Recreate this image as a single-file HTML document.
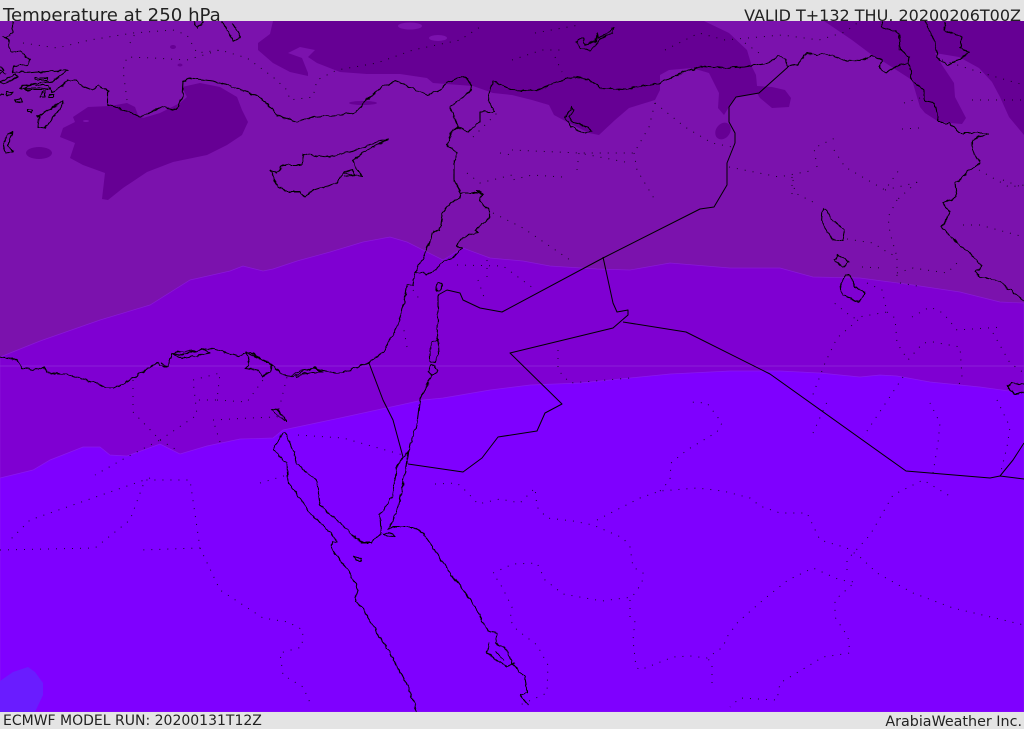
<!DOCTYPE html>
<html><head><meta charset="utf-8"><title>Temperature at 250 hPa</title>
<style>
html,body{margin:0;padding:0;background:#e4e4e4}
#w{position:relative;width:1024px;height:729px;overflow:hidden;background:#e4e4e4;font-family:"DejaVu Sans","Liberation Sans",sans-serif;color:#222}
.t{position:absolute;white-space:nowrap;line-height:1}
svg{position:absolute;left:0;top:21px}
</style></head><body><div id="w">
<div class="t" style="left:3px;top:7px;font-size:18.15px">Temperature at 250 hPa</div>
<div class="t" style="right:3px;top:8px;font-size:16px">VALID T+132 THU, 20200206T00Z</div>
<div class="t" style="left:3px;top:714px;font-size:14px">ECMWF MODEL RUN: 20200131T12Z</div>
<div class="t" style="right:2px;top:715px;font-size:14.3px">ArabiaWeather Inc.</div>
<svg width="1024" height="691" viewBox="0 21 1024 691">
<defs><filter id="j" filterUnits="userSpaceOnUse" x="0" y="21" width="1024" height="691" color-interpolation-filters="sRGB"><feTurbulence type="fractalNoise" baseFrequency="0.16" numOctaves="2" seed="4" result="n"/><feDisplacementMap in="SourceGraphic" in2="n" scale="4" xChannelSelector="R" yChannelSelector="G"/></filter></defs>
<rect x="0" y="21" width="1024" height="691" fill="#7b12ad"/>
<path d="M0 357L40 341 100 320 150 305 190 280 230 271 243 266 263 271 273 269 297 261 330 252 363 242 390 237 407 242 443 260 463 248 490 258 523 261 550 266 597 269 630 270 670 263 730 268 780 268 813 277 860 278 913 285 960 292 1000 302 1024 303V712H0Z" fill="#7f00d2" stroke="#8a18d8" stroke-width=".7"/>
<path d="M0 366H1024" stroke="#8b1fd8" stroke-width="1"/>
<path d="M0 478L33 470 50 460 83 447 100 447 110 455 127 456 160 444 180 454 207 446 240 439 273 438 283 430 340 418 423 400 443 398 490 390 530 385 580 383 630 378 670 374 730 371 780 371 820 373 860 377 880 375 897 376 930 382 980 387 1024 393V712H0Z" fill="#7f00ff" stroke="#8a18f0" stroke-width=".7"/>
<path d="M0 681L13 672 28 667 35 672 43 683 43 695 35 712H0Z" fill="#6a1cff"/>
<g fill="#660094">
<path d="M273 21L270 34 258 43 258 50 273 63 290 72 308 76 308 73 302 58 288 53 300 47 315 50 308 57 317 63 340 72 367 74 400 74 427 78 433 83 473 86 493 93 512 95 532 100 549 105 554 115 567 122 589 133 599 135 615 120 629 108 655 100 660 90 660 75 669 70 692 68 709 73 719 93 718 108 724 115 729 107 736 97 757 93 760 98 772 108 789 107 791 98 785 90 772 87 757 86 756 75 752 67 747 50 729 33 704 21Z"/>
<path d="M824 21L852 40 872 55 884 62 912 80 920 107 925 113 939 122 962 124 966 118 955 97 954 83 942 65 935 53 959 57 979 68 992 82 1000 97 1009 117 1024 135V21Z"/>
<path d="M73 117L88 107 110 106 127 103 135 107 138 115 143 118 160 113 180 103 187 97 182 87 200 83 220 87 237 97 242 110 248 122 242 135 227 145 207 155 173 162 147 172 123 188 108 200 102 199 105 173 83 165 70 158 75 143 60 137 63 128 75 122Z"/>
<ellipse cx="39" cy="153" rx="13" ry="6"/>
<ellipse cx="723" cy="131" rx="7" ry="9" transform="rotate(35 723 131)"/>
<ellipse cx="363" cy="103" rx="14" ry="2"/>
<ellipse cx="173" cy="47" rx="3" ry="2"/>
<ellipse cx="180" cy="65" rx="2.500" ry="1.500"/>
</g>
<g fill="#7b12ad">
<ellipse cx="410" cy="26" rx="12" ry="3.500"/>
<ellipse cx="438" cy="38" rx="9" ry="3"/>
<ellipse cx="86" cy="121" rx="3" ry="1"/>
</g>
<g fill="none" stroke="#000" stroke-width="1" stroke-dasharray="1 7" opacity=".8">
<path d="M435 484L457 483 467 492 478 504 500 499 520 503 535 488 537 507 547 518 573 521 593 525 623 538 630 547 633 567 643 573 642 583 632 597 602 601 563 594 545 580 537 563 513 564 493 573 502 587 512 607 510 620 517 630 537 645 548 665 547 693 520 705"/>
<path d="M597 520L640 498 660 491 697 488 723 491 750 498 760 506 780 513 807 513 820 540 847 548 860 557 877 573 913 593 953 608 1024 625"/>
<path d="M660 491L670 480 671 463 687 450 717 432 722 423 707 403 690 402"/>
<path d="M630 600L630 617 635 620 633 640 636 667 640 670 673 657 690 656 707 658 723 647 727 637 738 622 763 600 788 580 813 568 840 580 855 582 835 600 835 617 848 637 850 653 823 657 780 683 777 700 740 698 730 707M712 683L712 663 707 658"/>
<path d="M847 570L847 560 870 535 893 495 923 480 953 498M813 433L827 402M933 473L938 443 940 423 930 403M793 180L795 193 815 203M847 239L873 243 887 252 897 257 897 277M862 267L882 268M897 200L888 217 890 233 897 257M917 182L897 200M897 273L913 268 947 273 960 260M867 283L882 290 887 312 853 318 833 302M887 312L895 318 897 343 908 360 923 343 933 342 960 347 962 377 958 387M912 317L930 307 943 313 957 330 1003 327M900 283L923 287M858 320L837 338 825 363 812 397M903 377L863 437M997 400L1010 427 1007 447 1000 475M963 225L980 225 1024 237M993 333L1010 363 1024 373M1003 180L1024 188"/>
<path d="M512 60L542 50 564 50M535 33L579 25M555 57L562 72M665 50L699 33 725 40 782 35 819 40 845 32 860 21M745 43L759 53M655 103L685 127 712 143 732 147M655 103L649 127 634 153 579 153 512 150M625 162L579 153M634 153L637 170 655 200M562 177L532 175 512 180M577 170L579 153M729 167L779 177 815 170M792 177L792 200M817 167L814 148 835 138M834 150L845 167 885 190 899 170M885 190L919 182M904 103L920 98M902 129L919 128M972 100L1022 100M942 60L982 73 1024 85M979 170L1009 187 1024 185"/>
<path d="M23 43L57 48 90 40 133 33 173 30 187 35 197 53 220 50 247 58 273 77 287 90 290 100 313 97 317 80 337 70 377 63 413 50 460 40 480 27M127 100L123 70 127 57 153 58 187 60 220 50M130 43L137 30M473 137L500 110M500 153L512 155M467 173L480 183 512 175"/>
<path d="M493 213L523 228 570 260M457 265L503 266 533 288M487 260L487 277M478 280L485 300M413 290L420 300M407 347L403 325M558 350L558 370 570 383 630 378"/>
<path d="M133 380L133 412 160 440 127 457 95 475M160 440L197 415 193 380 220 373 217 400 197 400M217 400L247 402 263 380M213 420L250 418 277 417 287 377M220 442L213 420M160 440L180 452M298 435L343 438 403 455M150 478L30 520 10 540M0 550L95 548 130 520 145 480 190 480 200 548 140 550M200 548L220 590 263 618 288 622 303 630 302 647 280 653 283 675 303 687 312 707M260 483L287 475"/>
</g>
<g fill="none" stroke="#000" stroke-width="1.100" stroke-linejoin="round" filter="url(#j)">
<!-- north + levant coast -->
<path d="M0 357L17 360 22 368 33 370 43 367 47 373 70 375 93 382 105 388 115 388 133 378 157 363 160 366 168 366 172 354 182 355 200 350 210 348 227 353 237 356 250 352 263 360 272 365 283 375 293 377 310 368 330 372 340 373 368 363 383 352 397 327 403 307 407 286 413 285 415 272 422 260 427 250 434 231 440 230 443 212 452 202 460 198 461 193 454 180 454 163 457 153 447 144 452 131 458 127 450 107 472 90 470 82 462 76 447 83 440 90 428 95 405 85 395 81 383 86 370 97 360 108 356 112 340 115 313 117 297 122 277 115 263 100 255 95 233 87 213 81 190 78 183 82 182 97 177 110 163 107 140 117 132 113 108 104 108 91 98 85 93 90 82 86 75 80 68 80 60 88 52 92 50 88 20 89 23 85 53 81 68 70 25 73 20 71 13 73 13 66 28 65 30 60 20 51 10 53 8 40 2 36 7 38 13 33 13 21"/>
<path d="M172 354L182 352 205 350 210 353 195 356 182 358ZM245 352L250 360 245 368 258 370 262 376 270 372 272 364 262 359ZM290 376L300 371 315 368 322 372 312 372 305 374 296 377"/>
<path d="M161 363L168 366 160 366"/>
<!-- Aegean islands -->
<path d="M37 117L63 101 63 103 57 113 45 128 38 127 39 117ZM8 134L12 132 9 146 13 152 5 153 3 143ZM0 82L15 75 18 77 5 84ZM6 92H12V95H7ZM15 100L20 99 23 103 16 102ZM27 110H32V112H27ZM42 92H45V97H40ZM50 94H54V97H49ZM0 67L4 70 0 74M0 95L4 94M0 70L6 74M28 85H48L50 90 24 90ZM35 78H48V80H35Z"/>
<path d="M193 21L198 28 203 21M222 21L233 41 241 37 232 23"/>
<!-- Cyprus -->
<path d="M270 170L275 182 285 192 300 192 305 197 309 192 337 183 343 173 363 177 355 167 353 160 367 150 388 140 377 142 350 152 327 157 304 154 302 165 283 165 277 173ZM343 173L352 170 355 175 344 177"/>
<!-- Turkey south border & Iraq -->
<path d="M458 127L468 132 480 122 480 112 495 112 488 100 493 81 512 90 535 91 549 85 574 77 589 80 600 88 625 89 659 83 685 72 702 66 725 68 745 67 769 63 779 56 785 59 788 67 797 65 807 53 817 55 824 53 845 60 860 61 872 56 882 60 880 68 885 73 899 65 909 63 910 57 900 50 899 33 882 27 882 21"/>
<path d="M909 63L912 80 924 90 924 100 935 103 939 123 949 123 960 133 989 133 972 140 972 150 980 163 967 172 960 180 955 183 957 197 943 203 950 212 942 227 957 243 977 260 982 267 975 272 980 278 997 280 1024 301"/>
<path d="M925 21L935 43 937 57 947 65 954 62 969 53 960 47 962 37 952 33 944 30 945 21"/>
<path d="M438 295L438 320 437 337 438 340 432 341 430 350 430 362 435 363 439 352 438 340"/>
<path d="M430 365L428 372 432 375 437 372 435 366ZM432 375L420 400 417 423 408 453 403 457"/>
<ellipse cx="439" cy="287" rx="3" ry="4.500"/>
<!-- Lebanon -->
<path d="M461 193L478 193 477 191 483 195 479 200 490 212 490 217 475 230 479 233 467 235 458 242 457 246 462 248 453 258 439 263 436 271 427 274 415 272"/>
<!-- Sinai / Red Sea -->
<path d="M403 457L397 467 392 497 380 515 381 533 372 543 362 543 340 523 320 505 317 482 297 463 290 443 285 432 282 433 280 438 273 450 287 463 288 483 298 495 310 513 330 532 337 542 332 542 333 550 340 560 350 573 358 590 355 602 360 605 390 653 408 687 417 712"/>
<path d="M408 453L405 473 399 503 392 523 388 530 393 527 413 527 422 532 435 550 450 573 463 590 477 610 487 630 497 633 495 643 505 648 512 663 525 677 527 693 520 695 528 705"/>
<path d="M490 643L487 653 507 667 515 663M495 652L505 660"/>
<path d="M383 534L388 533 395 536 390 537ZM354 557L360 558 361 561 355 559ZM271 410L276 408 283 416 286 421 280 417Z"/>
<!-- lakes -->
<path d="M576 42L580 48 590 50 599 40 612 33 614 27 605 35 598 38 597 33 596 41 585 45 583 38 578 40ZM572 107L565 117 572 127 582 133 592 131 585 126 574 122 569 117 574 109Z"/>
<path d="M823 208L822 223 832 239 843 241 845 230 830 218 827 210ZM838 255L834 260 843 267 849 262 843 258ZM846 275L841 283 842 295 858 302 866 293 855 287 850 275ZM1024 384L1012 383 1008 386 1010 391 1016 394 1024 392"/>
</g>
<g fill="none" stroke="#000" stroke-width="1" stroke-linejoin="round">
<!-- straight political borders -->
<path d="M788 67L759 93 736 97 729 107 729 122 735 133 735 143 727 163 727 185 714 207 700 209 603 258 502 312 480 308 463 300 460 293 447 290 438 295"/>
<path d="M369 363L383 400 393 420 403 457"/>
<path d="M408 464L463 472 482 458 498 437 537 431 545 413 562 404 510 353 613 328 628 315 628 310 617 312 613 303 603 257"/>
<path d="M623 322L686 332 770 374 906 471 990 478 1000 476 1024 479M1000 476L1013 460 1024 443"/>
</g>
</svg>
</div></body></html>
